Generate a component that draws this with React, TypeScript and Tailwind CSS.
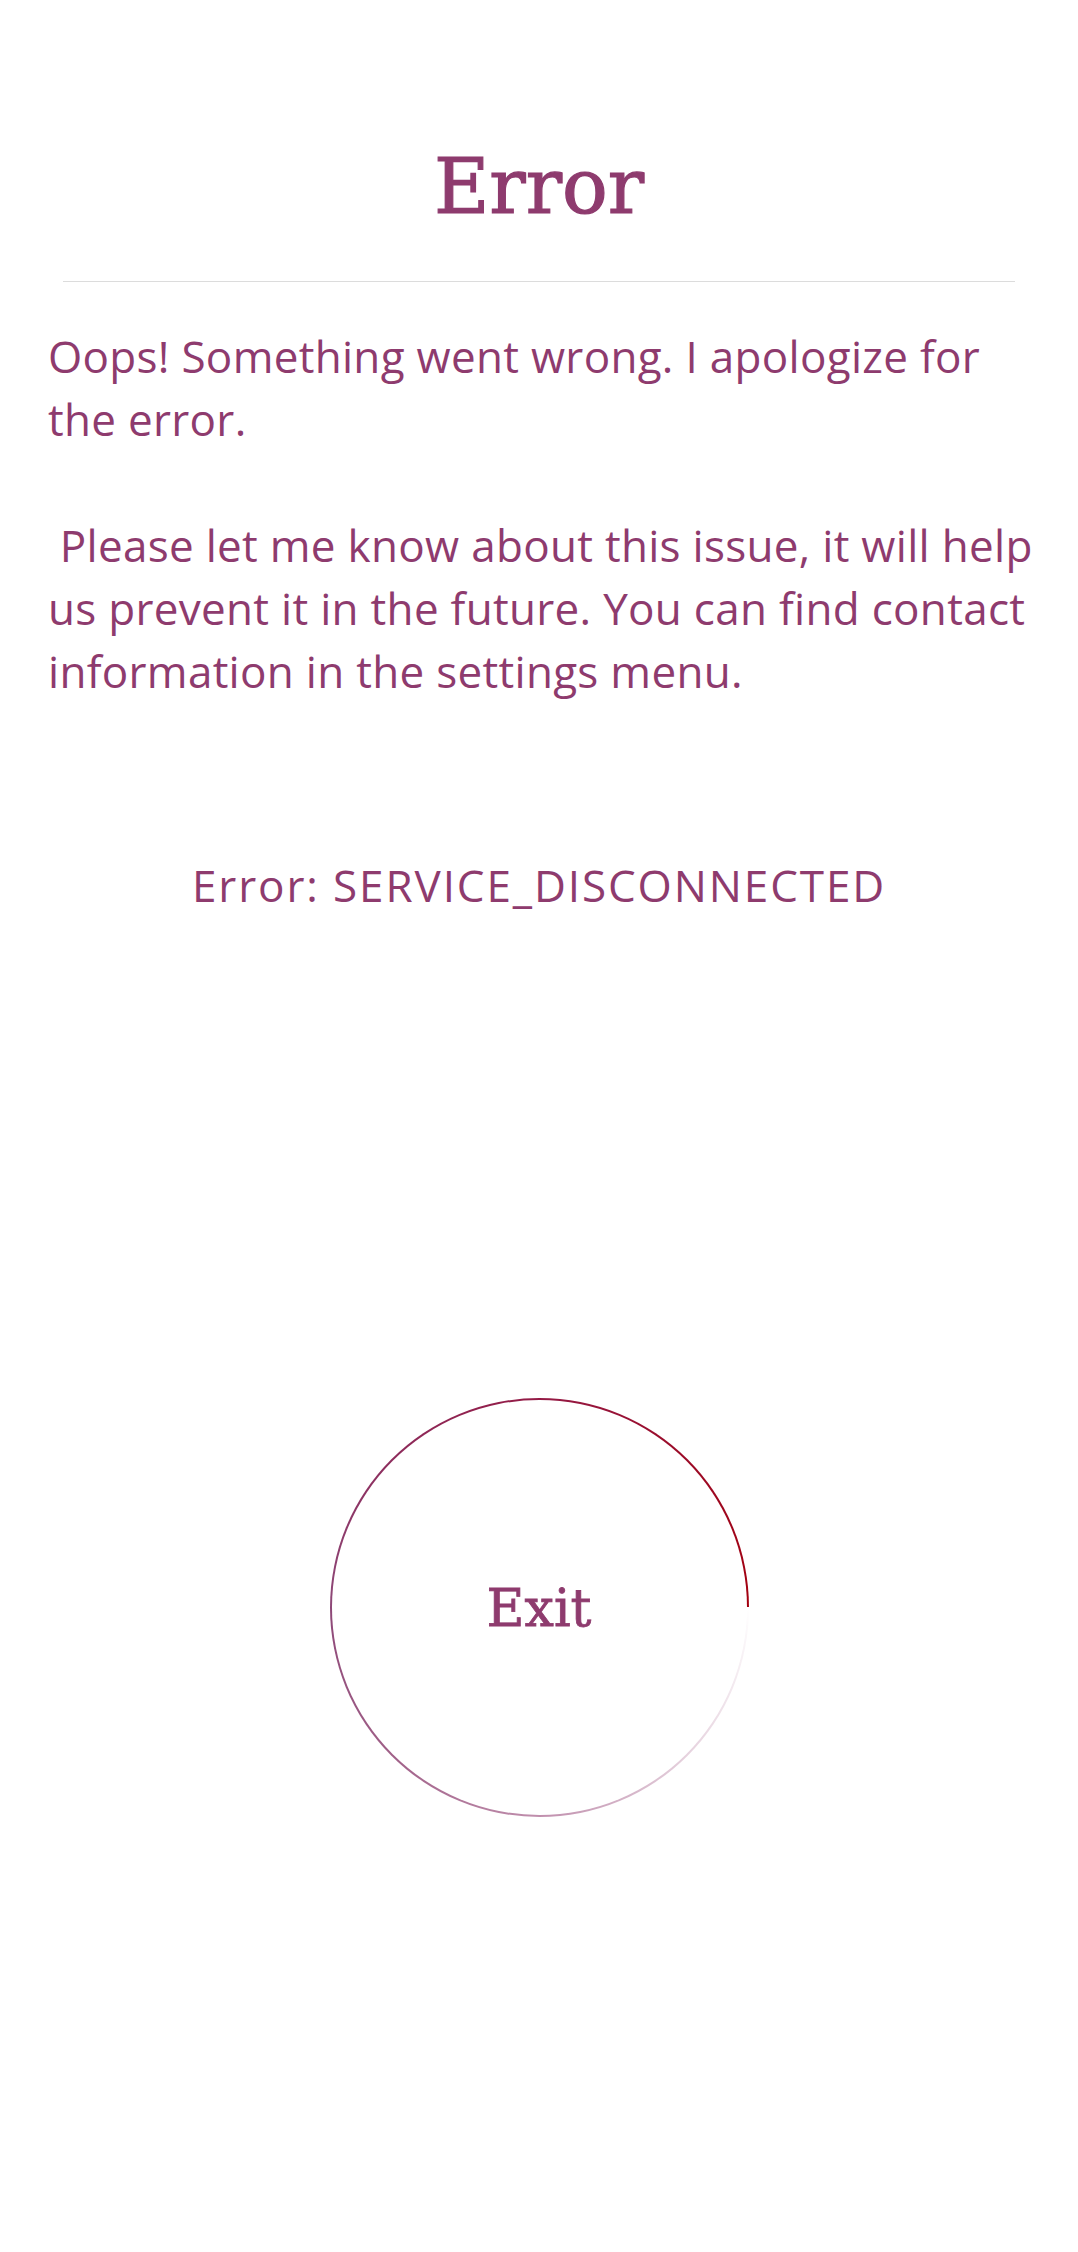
import React from "react";

export default function App() {
  const body =
    "Oops! Something went wrong. I apologize for the error.\n\n Please let me know about this issue, it will help us prevent it in the future. You can find contact information in the settings menu.";
  return (
    <div className="min-h-screen w-full bg-white flex flex-col items-center">
      <h1 className="pt-[149px] text-[76px] leading-none font-normal text-[#8e3b6e] [-webkit-text-stroke:1.2px_#8e3b6e] [font-family:'DejaVu_Serif',serif]">
        Error
      </h1>
      <div className="mt-[56px] h-px w-[952px] bg-[#dcdcdc]" />
      <div className="w-full pl-[48px] pr-[40px] mt-[43px]">
        <p className="whitespace-pre-wrap text-[44px] leading-[63px] tracking-[0.3px] text-[#8e3b6e] [font-family:'Open_Sans',sans-serif]">
          {body}
        </p>
      </div>
      <p className="mt-[151px] text-center text-[44px] leading-[63px] tracking-[1.9px] text-[#8e3b6e] [font-family:'Open_Sans',sans-serif]">
        Error: SERVICE_DISCONNECTED
      </p>
      <button className="mt-[481px] w-[419px] h-[419px] rounded-full p-[2px] bg-[conic-gradient(from_90deg,rgba(255,255,255,0)_0deg,#e6d2de_45deg,#c08fad_90deg,#a06088_135deg,#8e4878_180deg,#8d2c5c_225deg,#941a45_270deg,#9c0a26_315deg,#a3000f_360deg)]">
        <span className="flex w-full h-full items-center justify-center rounded-full bg-white">
          <span className="text-[52px] leading-none text-[#8e3b6e] [-webkit-text-stroke:0.8px_#8e3b6e] [font-family:'DejaVu_Serif',serif]">
            Exit
          </span>
        </span>
      </button>
    </div>
  );
}
